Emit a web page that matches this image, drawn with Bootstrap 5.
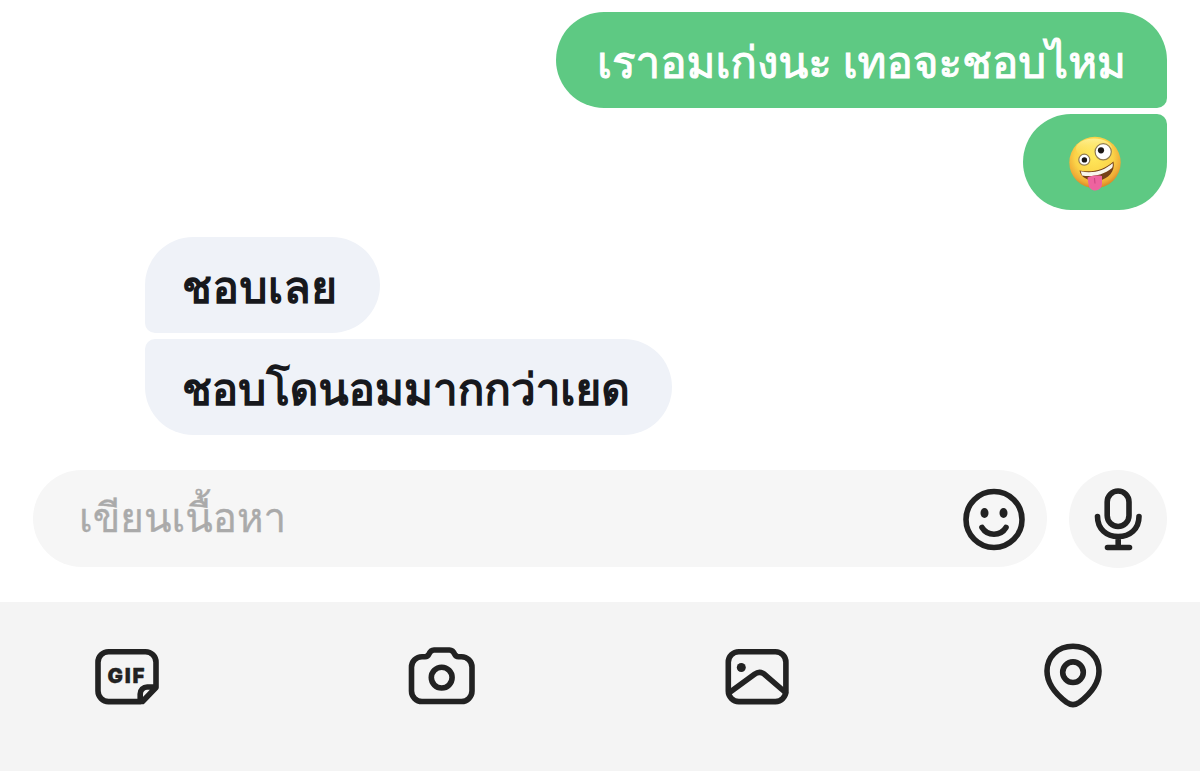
<!DOCTYPE html>
<html lang="th">
<head>
<meta charset="utf-8">
<meta name="viewport" content="width=device-width, initial-scale=1">
<title>Chat</title>
<link href="https://cdn.jsdelivr.net/npm/bootstrap@5.3.0/dist/css/bootstrap.min.css" rel="stylesheet">
<style>
body{font-family:Loma,"Noto Sans",sans-serif;color:#17181c;height:771px;overflow:hidden}
.chat-log{padding:12px 33px 0;height:435px}
.bubble{height:96px;border-radius:48px;font-size:44px;line-height:1;white-space:nowrap}
.bubble span{padding-top:4px}
.sent{background:#5ec983;color:#fff;-webkit-text-stroke:1px #fff;word-spacing:-4px;letter-spacing:-.08px}
.got{background:#eff2f8;margin-left:112px;padding-left:37px;-webkit-text-stroke:1.5px #17181c}
.sent.first{border-bottom-right-radius:10px;width:611px}
.sent.last{border-top-right-radius:10px;width:144px;margin-top:5.5px}
.got.first{border-bottom-left-radius:10px;width:235px;margin-top:27.5px;letter-spacing:.6px}
.got.last{border-top-left-radius:10px;width:527px;margin-top:6px}
.composer{padding:35px 33px 0;gap:22px;height:167px}
.field{height:97px;border-radius:49px;background:#f6f6f6;padding:0 20px 0 46px;color:#aaa;font-size:40.3px;line-height:1}
.field span{-webkit-text-stroke:.3px #aaa}
.mic{width:98px;height:98px;background:#f5f5f5}
.tools{height:169px;background:#f4f4f4;padding:40px 93px 0}
svg{display:block;flex:none}
.ico{fill:none;stroke:#222;stroke-width:5.6;stroke-linecap:round;stroke-linejoin:round}
.solid{fill:#222;stroke:none}
.gif{font:900 20.5px Inter,sans-serif;fill:#222;stroke:#222;stroke-width:.3}
</style>
</head>
<body class="bg-white d-flex flex-column">
<main class="chat-log d-flex flex-column">
  <div class="bubble sent first align-self-end d-flex align-items-center justify-content-center"><span>เราอมเก่งนะ เทอจะชอบไหม</span></div>
  <div class="bubble sent last align-self-end d-flex align-items-center justify-content-center">
    <svg width="56" height="58" viewBox="0 -1.5 56 58" role="img" aria-label="🤪">
      <defs>
        <radialGradient id="face" cx=".48" cy=".38" r=".62"><stop offset="0" stop-color="#ffe95c"/><stop offset=".6" stop-color="#fbd348"/><stop offset=".86" stop-color="#efaa35"/><stop offset="1" stop-color="#d98524"/></radialGradient>
        <linearGradient id="shine" x2="0" y2="1"><stop stop-color="#fffbb0"/><stop offset="1" stop-color="#ffe95c" stop-opacity="0"/></linearGradient>
      </defs>
      <circle cx="28" cy="28" r="25.7" fill="url(#face)"/>
      <ellipse cx="27" cy="14" rx="18" ry="10" fill="url(#shine)" opacity=".7"/>
      <circle cx="17.3" cy="25.2" r="5.500" fill="#fff" stroke="#8f7b52" stroke-width="1.2"/>
      <circle cx="17.4" cy="25.4" r="2.700" fill="#1b1715"/>
      <circle cx="36.2" cy="17.300" r="8.1" fill="#fff" stroke="#8f7b52" stroke-width="1.2"/>
      <circle cx="34" cy="15.800" r="3.1" fill="#1b1715"/>
      <path d="M12.500 36C25 38.500 37 35.500 46.500 27C48.500 37 41 44.500 32 46C22 47 14 43.500 12.500 36Z" fill="#754018"/>
      <path d="M13.700 36.800C25 39.500 37 36.500 45.600 28.800C46 31 45.800 32 45 33.500C36 41 25 42.500 15 41Z" fill="#f8f5ec"/>
      <path d="M20.500 43C25 40.800 30 40.800 35 41.500V49C35 53 32 56 28.300 56C24.300 56 22 53.500 21.500 50Z" fill="#ee639f"/>
      <path d="M27.500 43.500L28 49" stroke="#c94380" stroke-width="1" fill="none"/>
    </svg>
  </div>
  <div class="bubble got first align-self-start d-flex align-items-center"><span>ชอบเลย</span></div>
  <div class="bubble got last align-self-start d-flex align-items-center"><span>ชอบโดนอมมากกว่าเยด</span></div>
</main>
<section class="composer d-flex">
  <div class="field flex-grow-1 d-flex align-items-center justify-content-between">
    <span>เขียนเนื้อหา</span>
    <svg class="ico" width="66" height="66" viewBox="0 0 66 66">
      <circle cx="33" cy="33.500" r="28"/>
      <ellipse class="solid" cx="23.500" cy="27" rx="4" ry="5"/><ellipse class="solid" cx="42.500" cy="27" rx="4" ry="5"/>
      <path d="M21 41.500C26.500 50.500 39.500 50.500 45 41.500"/>
    </svg>
  </div>
  <div class="mic rounded-circle d-flex align-items-center justify-content-center">
    <svg class="ico" width="66" height="66" viewBox="0 0 66 66">
      <rect x="22.200" y="5" width="21.800" height="35.500" rx="10.900"/>
      <path d="M12.500 30.500C12.500 43 21.500 50.500 33.200 50.500S54 43 54 30.500M33.200 51V61M22.500 61.500H44.500"/>
    </svg>
  </div>
</section>
<footer class="tools d-flex align-items-start justify-content-between">
  <svg class="ico" width="68" height="68" viewBox="0 0 68 68">
    <path d="M47.500 59.600H15.500A10.500 10.500 0 0 1 5 49.100V20.200A10.500 10.500 0 0 1 15.500 9.700H52.500A10.500 10.500 0 0 1 63 20.200V45.500L49.500 59.500L47.200 59V52A7 7 0 0 1 54.200 45H62.500"/>
    <text class="gif" x="14.500" y="41.200" textLength="37">GIF</text>
  </svg>
  <svg class="ico" width="68" height="68" viewBox="0 0 68 68">
    <path d="M14 14.700H17C19 14.700 20 14 20.800 12.300C22 9.300 23.300 8 26 8H41.500C44.200 8 45.500 9.300 46.700 12.300C47.500 14 48.500 14.700 50.500 14.700H53.500A10.500 10.500 0 0 1 64 25.200V49A10.500 10.500 0 0 1 53.500 59.500H14A10.500 10.500 0 0 1 3.500 49V25.200A10.500 10.500 0 0 1 14 14.700Z"/>
    <circle cx="33.700" cy="35.600" r="10.400"/>
  </svg>
  <svg class="ico" width="68" height="68" viewBox="0 0 68 68">
    <rect x="4.300" y="9.700" width="57.600" height="49.900" rx="10.500"/>
    <circle class="solid" cx="17.300" cy="25.500" r="4.500"/>
    <path d="M5.500 50.500L30.500 32.300Q35.500 28.500 40.500 32.300L61.500 50.500"/>
  </svg>
  <svg class="ico" width="68" height="68" viewBox="0 0 68 68">
    <path d="M34 4.300C18.500 4.300 8 15 8 29C8 42 18 53 27.500 60.300Q34 65 40.500 60.300C50 53 60 42 60 29C60 15 49.500 4.300 34 4.300Z"/>
    <circle cx="34" cy="30.200" r="10.300"/>
  </svg>
</footer>
</body>
</html>
